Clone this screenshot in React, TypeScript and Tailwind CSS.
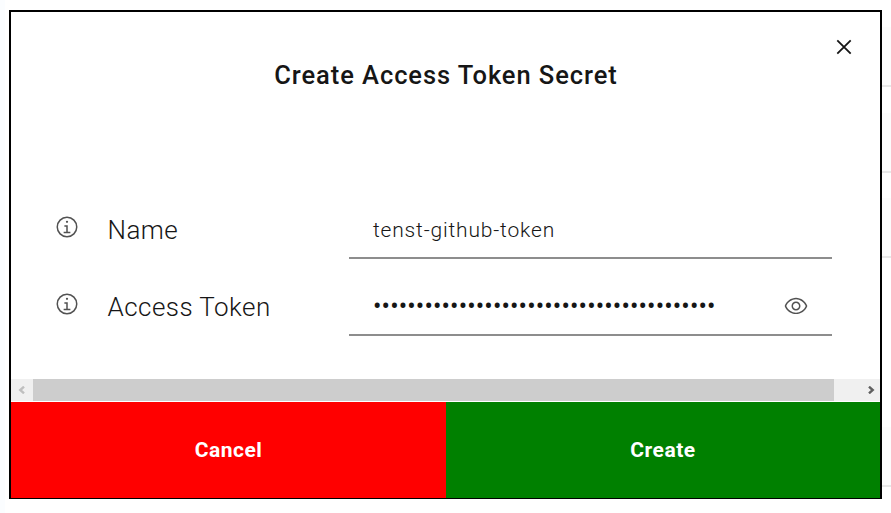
const lineRows = [
  { gap: 'h-[27px]' },
  { gap: 'h-[26px]' },
  { gap: 'h-[25px]' },
  { gap: 'h-[169px]' },
];

function InfoIcon() {
  return (
    <svg viewBox="0 0 32 32" className="h-6 w-6 shrink-0 fill-[#525252]">
      <path d="M17 22.300V13.500h-4.500v2H15v6.800h-3.500v2h9v-2zM16 7.500a1.500 1.500 0 1 0 1.500 1.500A1.500 1.500 0 0 0 16 7.500z" />
      <path d="M16 30a14 14 0 1 1 14-14 14 14 0 0 1-14 14zm0-26a12 12 0 1 0 12 12A12 12 0 0 0 16 4z" />
    </svg>
  );
}

function EyeIcon() {
  return (
    <svg viewBox="0 0 16 16" className="h-6 w-6 shrink-0 fill-[#525252]">
      <path d="M15.5 7.8C14.3 4.7 11.3 2.6 8 2.5 4.7 2.6 1.7 4.7.5 7.8c0 .1 0 .2 0 .3 1.2 3.1 4.1 5.2 7.5 5.3 3.3-.1 6.3-2.2 7.5-5.3 0-.1 0-.2 0-.3zM8 12.5c-2.7 0-5.4-2-6.5-4.5 1-2.5 3.8-4.5 6.5-4.5s5.4 2 6.5 4.5c-1 2.5-3.8 4.5-6.5 4.5z" />
      <path d="M8 5C6.300 5 5 6.300 5 8s1.300 3 3 3 3-1.300 3-3-1.300-3-3-3zm0 5c-1.100 0-2-.9-2-2s.9-2 2-2 2 .9 2 2-.9 2-2 2z" />
    </svg>
  );
}

function Chevron({ className }: { className: string }) {
  return (
    <svg viewBox="0 0 7 8" className={className} fill="none" strokeWidth="2.4">
      <path d="M1 .7 4.700 4 1 7.300" />
    </svg>
  );
}

export default function App() {
  return (
    <div className="flex h-[513px] w-[891px] overflow-hidden bg-white font-['Roboto','Liberation_Sans',sans-serif] text-[#161616]">
      <div className="h-full w-[5px] bg-[#fbfdff]" />
      <div className="mt-[10px] ml-1 flex h-[489px] w-[873px] shrink-0 flex-col border-2 border-b border-black bg-white">
        <div className="flex h-[50px] justify-end pt-[23px] pr-6">
          <svg viewBox="0 0 24 24" className="h-6 w-6 fill-none stroke-[#161616]" strokeWidth="1.8">
            <path d="M5.300 5.300 18.700 18.700M18.700 5.300 5.300 18.700" />
          </svg>
        </div>
        <h1 className="-mt-[2px] pl-px text-center text-[25.5px] leading-[30px] font-medium tracking-[0.93px]">
          Create Access Token Secret
        </h1>
        <div className="mt-[111px] flex h-[58px] pl-11">
          <div className="w-[25px] pt-[14px]"><InfoIcon /></div>
          <label className="w-[269px] pt-[13px] pl-[27.500px] text-[26px] leading-[32px] font-light tracking-[0.45px]">Name</label>
          <div className="h-[58px] w-[483px] border-b-2 border-[#8d8d8d] pt-4 pl-6 text-[21px] leading-[26px] font-light tracking-[0.82px]">
            tenst-github-token
          </div>
        </div>
        <div className="mt-[19px] flex h-[58px] pl-11">
          <div className="w-[25px] pt-[14px]"><InfoIcon /></div>
          <label className="w-[269px] pt-[13px] pl-[27.500px] text-[26px] leading-[32px] font-light tracking-[0.45px]">Access Token</label>
          <div className="flex h-[58px] w-[483px] items-center justify-between border-b-2 border-[#8d8d8d] pr-6 pl-6">
            <span className="pt-[2px] text-[25px] leading-[26px] tracking-[0.13px]">{'•'.repeat(40)}</span>
            <EyeIcon />
          </div>
        </div>
        <div className="mt-auto flex h-[22px] shrink-0 items-center bg-[#f0f0f0]">
          <div className="flex w-[22px] justify-center pr-px"><Chevron className="h-2 w-[7px] rotate-180 stroke-[#bfbfbf]" /></div>
          <div className="h-full w-[801px] bg-[#cdcdcd]" />
          <div className="flex flex-1 justify-end pr-[5px]"><Chevron className="h-2 w-[7px] stroke-[#606060]" /></div>
        </div>
        <div className="mt-px flex h-24 shrink-0 text-[21px] leading-[26px] font-bold tracking-[0.5px] text-white">
          <button className="w-[435px] bg-[red]">Cancel</button>
          <button className="w-[434px] bg-[green]">Create</button>
        </div>
      </div>
      <div className="flex-1">
        {lineRows.map((row) => (
          <div key={row.gap}>
            <div className={row.gap} />
            <div className="h-[60px] border-b-2 border-[#e8e8e8] bg-[#fcfcfc]" />
          </div>
        ))}
      </div>
    </div>
  );
}
